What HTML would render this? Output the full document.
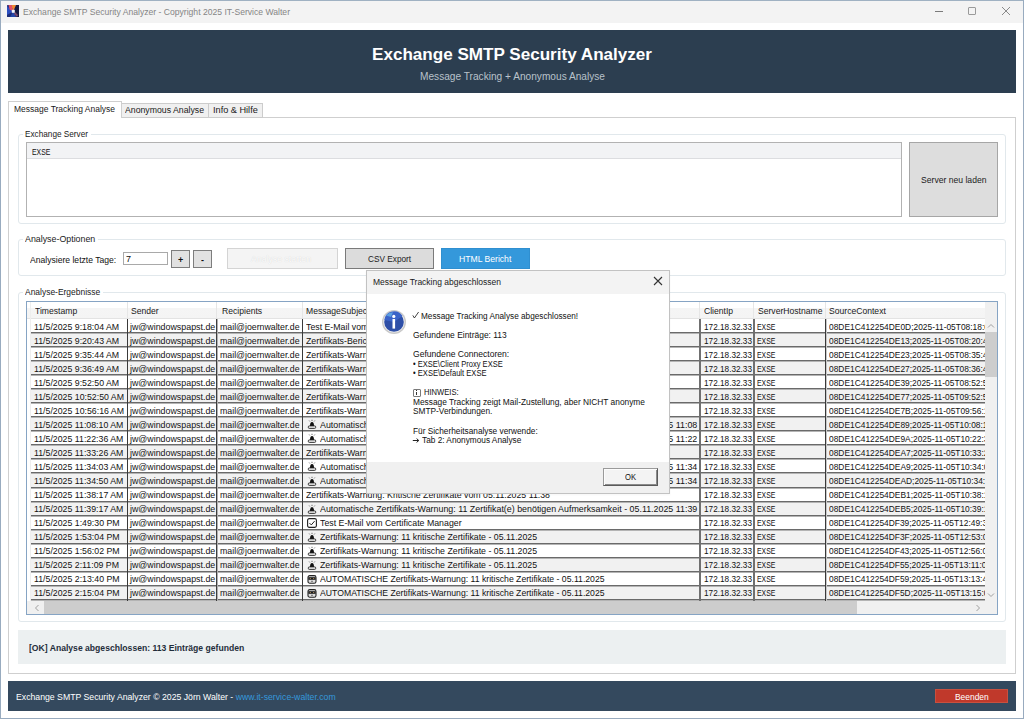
<!DOCTYPE html><html><head><meta charset="utf-8"><style>html,body{margin:0;padding:0;width:1024px;height:719px;overflow:hidden;background:#fff}body{position:relative;font-family:'Liberation Sans',sans-serif}body>div{position:absolute}.t{position:absolute;white-space:nowrap;line-height:normal;transform-origin:0 0}.c{position:absolute;overflow:hidden}</style></head><body>
<div style="left:0px;top:0px;width:1024px;height:719px;background:#fff"></div>
<div style="left:1px;top:1px;width:1022px;height:22px;background:#f3f3f3"></div>
<div style="left:0px;top:0px;width:1024px;height:1px;background:#9fb1c2"></div>
<div style="left:0px;top:0px;width:1px;height:719px;background:#98abbf"></div>
<div style="left:1023px;top:0px;width:1px;height:719px;background:#98abbf"></div>
<div style="left:0px;top:718px;width:1024px;height:1px;background:#98abbf"></div>
<svg style="position:absolute;left:6.5px;top:5px" width="12" height="12" viewBox="0 0 12 12">
<rect width="12" height="12" rx="0.6" fill="#1c2d78"/>
<polygon points="0,1 0,10 6,6.5" fill="#2c4fc0"/>
<polygon points="9,0 12,0 12,12 9,12 6.5,6.5" fill="#141a40"/>
<polygon points="4,0 9,0 6.3,6.3" fill="#f08a30"/>
<polygon points="1.5,0 4.5,0 6.3,6.3 2.5,4.5" fill="#e0506a"/>
<polygon points="3,12 9,12 6.3,6.5" fill="#2446a8"/>
<polygon points="8,7 11,10 10,12 7,9" fill="#7a4a70"/>
<rect x="4.8" y="4.8" width="3" height="3" fill="#f4f4fb"/></svg>
<div class="t" style="left:22.50px;top:5.90px;font-size:9.6px;color:#858585;transform:scaleX(0.8958);">Exchange SMTP Security Analyzer - Copyright 2025 IT-Service Walter</div>
<div style="left:935px;top:11px;width:8px;height:1px;background:#7a7a7a"></div>
<div style="position:absolute;left:968px;top:7px;width:6px;height:6px;border:1px solid #9a9a9a;border-radius:1px"></div>
<svg style="position:absolute;left:1001px;top:6px" width="10" height="10" viewBox="0 0 10 10"><path d="M1 1L9 9M9 1L1 9" stroke="#8a8a8a" stroke-width="1"/></svg>
<div style="left:8px;top:30px;width:1008px;height:63px;background:#2c3e50"></div>
<div class="t" style="left:372.30px;top:44.20px;font-size:17.4px;color:#fff;font-weight:bold;transform:scaleX(0.9820);">Exchange SMTP Security Analyzer</div>
<div class="t" style="left:419.70px;top:70.70px;font-size:10.2px;color:#b9c2cb;transform:scaleX(0.9945);">Message Tracking + Anonymous Analyse</div>
<div style="left:8px;top:117px;width:1008px;height:557px;background:#fff;border:1px solid #cfcfcf;box-sizing:border-box"></div>
<div style="left:121px;top:103px;width:142px;height:15px;background:#f0f0f0;border:1px solid #cccccc;box-sizing:border-box"></div>
<div style="left:208px;top:103px;width:1px;height:15px;background:#cccccc"></div>
<div style="left:8px;top:101px;width:114px;height:17px;background:#fff;border:1px solid #cfcfcf;border-bottom:none;box-sizing:border-box"></div>
<div class="t" style="left:14.40px;top:103.30px;font-size:9.6px;color:#1a1a1a;transform:scaleX(0.8850);">Message Tracking Analyse</div>
<div class="t" style="left:124.60px;top:103.80px;font-size:9.6px;color:#1a1a1a;transform:scaleX(0.9087);">Anonymous Analyse</div>
<div class="t" style="left:213.00px;top:103.80px;font-size:9.6px;color:#1a1a1a;transform:scaleX(0.9545);">Info &amp; Hilfe</div>
<div style="left:18px;top:134px;width:988px;height:90px;border:1px solid #e1e8ec;border-radius:3px;box-sizing:border-box"></div>
<div style="left:22.9px;top:132px;width:68.0px;height:5px;background:#fff"></div>
<div class="t" style="left:24.90px;top:127.70px;font-size:9.8px;color:#1a1a1a;transform:scaleX(0.8383);">Exchange Server</div>
<div style="left:26px;top:142px;width:876px;height:75px;background:#fff;border:1px solid #b2b2b2;box-sizing:border-box"></div>
<div style="left:27px;top:143px;width:874px;height:16px;background:#f2f3f5;border-bottom:1px solid #dcdde0;box-sizing:border-box"></div>
<div class="t" style="left:31.60px;top:146.00px;font-size:9.6px;color:#111;transform:scaleX(0.7146);">EXSE</div>
<div style="left:909px;top:142px;width:89px;height:75px;background:#dddddd;border:1px solid #a6a6a6;box-sizing:border-box"></div>
<div class="t" style="left:920.90px;top:173.90px;font-size:9.8px;color:#222;transform:scaleX(0.8777);">Server neu laden</div>
<div style="left:18px;top:239px;width:988px;height:37px;border:1px solid #e1e8ec;border-radius:3px;box-sizing:border-box"></div>
<div style="left:22.6px;top:237px;width:75.30000000000001px;height:5px;background:#fff"></div>
<div class="t" style="left:24.60px;top:233.00px;font-size:9.8px;color:#1a1a1a;transform:scaleX(0.9025);">Analyse-Optionen</div>
<div class="t" style="left:30.00px;top:253.70px;font-size:9.8px;color:#111;transform:scaleX(0.8761);">Analysiere letzte Tage:</div>
<div style="left:123px;top:252px;width:45px;height:13px;background:#fff;border:1px solid #a9a9a9;box-sizing:border-box"></div>
<div class="t" style="left:125.50px;top:253.40px;font-size:9.8px;color:#111;transform:scaleX(0.9200);">7</div>
<div style="left:171px;top:250px;width:19px;height:18px;background:#e1e1e1;border:1px solid #7d7d7d;box-sizing:border-box"></div>
<div style="left:193px;top:250px;width:19px;height:18px;background:#e1e1e1;border:1px solid #7d7d7d;box-sizing:border-box"></div>
<div class="t" style="left:178.00px;top:253.50px;font-size:9.8px;color:#111;font-weight:bold;transform:scaleX(0.9200);">+</div>
<div class="t" style="left:201.00px;top:253.50px;font-size:9.8px;color:#111;font-weight:bold;transform:scaleX(0.9200);">-</div>
<div style="left:227px;top:248px;width:111px;height:21px;background:#f4f4f4;border:1px solid #d4d4d4;box-sizing:border-box"></div>
<div class="t" style="left:251.00px;top:253.30px;font-size:9.8px;color:#fcfcfc;transform:scaleX(0.8885);text-shadow:0 0 1px #cdcdcd;">Analyse starten</div>
<div style="left:345px;top:248px;width:89px;height:21px;background:#dcdcdc;border:1px solid #7a7a7a;box-sizing:border-box"></div>
<div class="t" style="left:367.50px;top:253.30px;font-size:9.8px;color:#222;transform:scaleX(0.8420);">CSV Export</div>
<div style="left:441px;top:248px;width:89px;height:21px;background:#3498db;border:1px solid #2f8fd0;box-sizing:border-box"></div>
<div class="t" style="left:459.20px;top:253.30px;font-size:9.8px;color:#fff;transform:scaleX(0.8785);">HTML Bericht</div>
<div style="left:18px;top:292px;width:988px;height:330px;border:1px solid #e1e8ec;border-radius:3px;box-sizing:border-box"></div>
<div style="left:22.6px;top:290px;width:80.20000000000002px;height:5px;background:#fff"></div>
<div class="t" style="left:24.60px;top:285.90px;font-size:9.8px;color:#1a1a1a;transform:scaleX(0.8630);">Analyse-Ergebnisse</div>
<div style="left:26px;top:301px;width:972px;height:314px;background:#fff;border:1px solid #86a4c4;box-sizing:border-box"></div>
<div style="left:27px;top:302px;width:958px;height:17px;background:linear-gradient(#ffffff 0,#ffffff 6.5px,#f5f5f5 6.5px,#f4f4f4);border-bottom:1px solid #e3e3e3;box-sizing:border-box"></div>
<div style="left:127px;top:302px;width:1px;height:16px;background:#e6e6e6"></div>
<div style="left:216px;top:302px;width:1px;height:16px;background:#e6e6e6"></div>
<div style="left:302px;top:302px;width:1px;height:16px;background:#e6e6e6"></div>
<div style="left:699px;top:302px;width:1px;height:16px;background:#e6e6e6"></div>
<div style="left:753px;top:302px;width:1px;height:16px;background:#e6e6e6"></div>
<div style="left:825px;top:302px;width:1px;height:16px;background:#e6e6e6"></div>
<div style="left:30px;top:302px;width:1px;height:299px;background:#eeeeee"></div>
<div class="t" style="left:34.90px;top:304.90px;font-size:9.8px;color:#1a1a1a;transform:scaleX(0.8770);">Timestamp</div>
<div class="t" style="left:131.40px;top:304.90px;font-size:9.8px;color:#1a1a1a;transform:scaleX(0.8770);">Sender</div>
<div class="t" style="left:221.70px;top:304.90px;font-size:9.8px;color:#1a1a1a;transform:scaleX(0.8770);">Recipients</div>
<div class="t" style="left:305.80px;top:304.90px;font-size:9.8px;color:#1a1a1a;transform:scaleX(0.8770);">MessageSubject</div>
<div class="t" style="left:704.20px;top:304.90px;font-size:9.8px;color:#1a1a1a;transform:scaleX(0.8770);">ClientIp</div>
<div class="t" style="left:758.10px;top:304.90px;font-size:9.8px;color:#1a1a1a;transform:scaleX(0.8770);">ServerHostname</div>
<div class="t" style="left:829.30px;top:304.90px;font-size:9.8px;color:#1a1a1a;transform:scaleX(0.8770);">SourceContext</div>
<div style="left:31px;top:319px;width:954px;height:13px;background:#ffffff"></div>
<div style="left:31px;top:332px;width:954px;height:1px;background:#6a6a6a"></div>
<div style="left:31px;top:333px;width:954px;height:1px;background:#b4b4b4"></div>
<div class="c" style="left:31px;top:318px;width:96px;height:16px"><div class="t" style="left:2.80px;top:3.00px;font-size:9.8px;color:#111;transform:scaleX(0.8949);">11/5/2025 9:18:04 AM</div></div>
<div class="c" style="left:128px;top:318px;width:88px;height:16px"><div class="t" style="left:1.60px;top:3.00px;font-size:9.8px;color:#111;transform:scaleX(0.9034);">jw@windowspapst.de</div></div>
<div class="c" style="left:218px;top:318px;width:84px;height:16px"><div class="t" style="left:1.90px;top:3.00px;font-size:9.8px;color:#111;transform:scaleX(0.8949);">mail@joernwalter.de</div></div>
<div class="c" style="left:303px;top:318px;width:397px;height:16px"><div class="t" style="left:2.50px;top:3.00px;font-size:9.8px;color:#111;transform:scaleX(0.8949);">Test E-Mail vom Certificate Manager</div></div>
<div class="c" style="left:701px;top:318px;width:53px;height:16px"><div class="t" style="left:2.50px;top:3.00px;font-size:9.8px;color:#111;transform:scaleX(0.8389);">172.18.32.33</div></div>
<div class="c" style="left:755px;top:318px;width:70px;height:16px"><div class="t" style="left:1.60px;top:3.00px;font-size:9.8px;color:#111;transform:scaleX(0.7041);">EXSE</div></div>
<div class="c" style="left:826px;top:318px;width:159px;height:16px"><div class="t" style="left:2.80px;top:3.00px;font-size:9.8px;color:#111;transform:scaleX(0.8569);">08DE1C412254DE0D;2025-11-05T08:18:04</div></div>
<div style="left:31px;top:334px;width:954px;height:12px;background:#f1f1f1"></div>
<div style="left:31px;top:346px;width:954px;height:1px;background:#6a6a6a"></div>
<div style="left:31px;top:347px;width:954px;height:1px;background:#b4b4b4"></div>
<div class="c" style="left:31px;top:331px;width:96px;height:16px"><div class="t" style="left:2.80px;top:3.99px;font-size:9.8px;color:#111;transform:scaleX(0.8949);">11/5/2025 9:20:43 AM</div></div>
<div class="c" style="left:128px;top:331px;width:88px;height:16px"><div class="t" style="left:1.60px;top:3.99px;font-size:9.8px;color:#111;transform:scaleX(0.9034);">jw@windowspapst.de</div></div>
<div class="c" style="left:218px;top:331px;width:84px;height:16px"><div class="t" style="left:1.90px;top:3.99px;font-size:9.8px;color:#111;transform:scaleX(0.8949);">mail@joernwalter.de</div></div>
<div class="c" style="left:303px;top:331px;width:397px;height:16px"><div class="t" style="left:2.50px;top:3.99px;font-size:9.8px;color:#111;transform:scaleX(0.8949);">Zertifikats-Bericht vom 05.11.2025</div></div>
<div class="c" style="left:701px;top:331px;width:53px;height:16px"><div class="t" style="left:2.50px;top:3.99px;font-size:9.8px;color:#111;transform:scaleX(0.8389);">172.18.32.33</div></div>
<div class="c" style="left:755px;top:331px;width:70px;height:16px"><div class="t" style="left:1.60px;top:3.99px;font-size:9.8px;color:#111;transform:scaleX(0.7041);">EXSE</div></div>
<div class="c" style="left:826px;top:331px;width:159px;height:16px"><div class="t" style="left:2.80px;top:3.99px;font-size:9.8px;color:#111;transform:scaleX(0.8569);">08DE1C412254DE13;2025-11-05T08:20:43</div></div>
<div style="left:31px;top:348px;width:954px;height:12px;background:#ffffff"></div>
<div style="left:31px;top:360px;width:954px;height:1px;background:#6a6a6a"></div>
<div style="left:31px;top:361px;width:954px;height:1px;background:#b4b4b4"></div>
<div class="c" style="left:31px;top:345px;width:96px;height:16px"><div class="t" style="left:2.80px;top:3.98px;font-size:9.8px;color:#111;transform:scaleX(0.8949);">11/5/2025 9:35:44 AM</div></div>
<div class="c" style="left:128px;top:345px;width:88px;height:16px"><div class="t" style="left:1.60px;top:3.98px;font-size:9.8px;color:#111;transform:scaleX(0.9034);">jw@windowspapst.de</div></div>
<div class="c" style="left:218px;top:345px;width:84px;height:16px"><div class="t" style="left:1.90px;top:3.98px;font-size:9.8px;color:#111;transform:scaleX(0.8949);">mail@joernwalter.de</div></div>
<div class="c" style="left:303px;top:345px;width:397px;height:16px"><div class="t" style="left:2.50px;top:3.98px;font-size:9.8px;color:#111;transform:scaleX(0.8949);">Zertifikats-Warnung: Kritische Zertifikate vom 05.11.2025 09:35</div></div>
<div class="c" style="left:701px;top:345px;width:53px;height:16px"><div class="t" style="left:2.50px;top:3.98px;font-size:9.8px;color:#111;transform:scaleX(0.8389);">172.18.32.33</div></div>
<div class="c" style="left:755px;top:345px;width:70px;height:16px"><div class="t" style="left:1.60px;top:3.98px;font-size:9.8px;color:#111;transform:scaleX(0.7041);">EXSE</div></div>
<div class="c" style="left:826px;top:345px;width:159px;height:16px"><div class="t" style="left:2.80px;top:3.98px;font-size:9.8px;color:#111;transform:scaleX(0.8569);">08DE1C412254DE23;2025-11-05T08:35:44</div></div>
<div style="left:31px;top:362px;width:954px;height:12px;background:#f1f1f1"></div>
<div style="left:31px;top:374px;width:954px;height:1px;background:#6a6a6a"></div>
<div style="left:31px;top:375px;width:954px;height:1px;background:#b4b4b4"></div>
<div class="c" style="left:31px;top:359px;width:96px;height:16px"><div class="t" style="left:2.80px;top:3.97px;font-size:9.8px;color:#111;transform:scaleX(0.8949);">11/5/2025 9:36:49 AM</div></div>
<div class="c" style="left:128px;top:359px;width:88px;height:16px"><div class="t" style="left:1.60px;top:3.97px;font-size:9.8px;color:#111;transform:scaleX(0.9034);">jw@windowspapst.de</div></div>
<div class="c" style="left:218px;top:359px;width:84px;height:16px"><div class="t" style="left:1.90px;top:3.97px;font-size:9.8px;color:#111;transform:scaleX(0.8949);">mail@joernwalter.de</div></div>
<div class="c" style="left:303px;top:359px;width:397px;height:16px"><div class="t" style="left:2.50px;top:3.97px;font-size:9.8px;color:#111;transform:scaleX(0.8949);">Zertifikats-Warnung: Kritische Zertifikate vom 05.11.2025 09:36</div></div>
<div class="c" style="left:701px;top:359px;width:53px;height:16px"><div class="t" style="left:2.50px;top:3.97px;font-size:9.8px;color:#111;transform:scaleX(0.8389);">172.18.32.33</div></div>
<div class="c" style="left:755px;top:359px;width:70px;height:16px"><div class="t" style="left:1.60px;top:3.97px;font-size:9.8px;color:#111;transform:scaleX(0.7041);">EXSE</div></div>
<div class="c" style="left:826px;top:359px;width:159px;height:16px"><div class="t" style="left:2.80px;top:3.97px;font-size:9.8px;color:#111;transform:scaleX(0.8569);">08DE1C412254DE27;2025-11-05T08:36:49</div></div>
<div style="left:31px;top:376px;width:954px;height:12px;background:#ffffff"></div>
<div style="left:31px;top:388px;width:954px;height:1px;background:#6a6a6a"></div>
<div style="left:31px;top:389px;width:954px;height:1px;background:#b4b4b4"></div>
<div class="c" style="left:31px;top:373px;width:96px;height:16px"><div class="t" style="left:2.80px;top:3.96px;font-size:9.8px;color:#111;transform:scaleX(0.8949);">11/5/2025 9:52:50 AM</div></div>
<div class="c" style="left:128px;top:373px;width:88px;height:16px"><div class="t" style="left:1.60px;top:3.96px;font-size:9.8px;color:#111;transform:scaleX(0.9034);">jw@windowspapst.de</div></div>
<div class="c" style="left:218px;top:373px;width:84px;height:16px"><div class="t" style="left:1.90px;top:3.96px;font-size:9.8px;color:#111;transform:scaleX(0.8949);">mail@joernwalter.de</div></div>
<div class="c" style="left:303px;top:373px;width:397px;height:16px"><div class="t" style="left:2.50px;top:3.96px;font-size:9.8px;color:#111;transform:scaleX(0.8949);">Zertifikats-Warnung: Kritische Zertifikate vom 05.11.2025 09:52</div></div>
<div class="c" style="left:701px;top:373px;width:53px;height:16px"><div class="t" style="left:2.50px;top:3.96px;font-size:9.8px;color:#111;transform:scaleX(0.8389);">172.18.32.33</div></div>
<div class="c" style="left:755px;top:373px;width:70px;height:16px"><div class="t" style="left:1.60px;top:3.96px;font-size:9.8px;color:#111;transform:scaleX(0.7041);">EXSE</div></div>
<div class="c" style="left:826px;top:373px;width:159px;height:16px"><div class="t" style="left:2.80px;top:3.96px;font-size:9.8px;color:#111;transform:scaleX(0.8569);">08DE1C412254DE39;2025-11-05T08:52:50</div></div>
<div style="left:31px;top:390px;width:954px;height:12px;background:#f1f1f1"></div>
<div style="left:31px;top:402px;width:954px;height:1px;background:#6a6a6a"></div>
<div style="left:31px;top:403px;width:954px;height:1px;background:#b4b4b4"></div>
<div class="c" style="left:31px;top:387px;width:96px;height:16px"><div class="t" style="left:2.80px;top:3.95px;font-size:9.8px;color:#111;transform:scaleX(0.8949);">11/5/2025 10:52:50 AM</div></div>
<div class="c" style="left:128px;top:387px;width:88px;height:16px"><div class="t" style="left:1.60px;top:3.95px;font-size:9.8px;color:#111;transform:scaleX(0.9034);">jw@windowspapst.de</div></div>
<div class="c" style="left:218px;top:387px;width:84px;height:16px"><div class="t" style="left:1.90px;top:3.95px;font-size:9.8px;color:#111;transform:scaleX(0.8949);">mail@joernwalter.de</div></div>
<div class="c" style="left:303px;top:387px;width:397px;height:16px"><div class="t" style="left:2.50px;top:3.95px;font-size:9.8px;color:#111;transform:scaleX(0.8949);">Zertifikats-Warnung: Kritische Zertifikate vom 05.11.2025 10:52</div></div>
<div class="c" style="left:701px;top:387px;width:53px;height:16px"><div class="t" style="left:2.50px;top:3.95px;font-size:9.8px;color:#111;transform:scaleX(0.8389);">172.18.32.33</div></div>
<div class="c" style="left:755px;top:387px;width:70px;height:16px"><div class="t" style="left:1.60px;top:3.95px;font-size:9.8px;color:#111;transform:scaleX(0.7041);">EXSE</div></div>
<div class="c" style="left:826px;top:387px;width:159px;height:16px"><div class="t" style="left:2.80px;top:3.95px;font-size:9.8px;color:#111;transform:scaleX(0.8569);">08DE1C412254DE77;2025-11-05T09:52:50</div></div>
<div style="left:31px;top:404px;width:954px;height:12px;background:#ffffff"></div>
<div style="left:31px;top:416px;width:954px;height:1px;background:#6a6a6a"></div>
<div style="left:31px;top:417px;width:954px;height:1px;background:#b4b4b4"></div>
<div class="c" style="left:31px;top:401px;width:96px;height:16px"><div class="t" style="left:2.80px;top:3.94px;font-size:9.8px;color:#111;transform:scaleX(0.8949);">11/5/2025 10:56:16 AM</div></div>
<div class="c" style="left:128px;top:401px;width:88px;height:16px"><div class="t" style="left:1.60px;top:3.94px;font-size:9.8px;color:#111;transform:scaleX(0.9034);">jw@windowspapst.de</div></div>
<div class="c" style="left:218px;top:401px;width:84px;height:16px"><div class="t" style="left:1.90px;top:3.94px;font-size:9.8px;color:#111;transform:scaleX(0.8949);">mail@joernwalter.de</div></div>
<div class="c" style="left:303px;top:401px;width:397px;height:16px"><div class="t" style="left:2.50px;top:3.94px;font-size:9.8px;color:#111;transform:scaleX(0.8949);">Zertifikats-Warnung: Kritische Zertifikate vom 05.11.2025 10:56</div></div>
<div class="c" style="left:701px;top:401px;width:53px;height:16px"><div class="t" style="left:2.50px;top:3.94px;font-size:9.8px;color:#111;transform:scaleX(0.8389);">172.18.32.33</div></div>
<div class="c" style="left:755px;top:401px;width:70px;height:16px"><div class="t" style="left:1.60px;top:3.94px;font-size:9.8px;color:#111;transform:scaleX(0.7041);">EXSE</div></div>
<div class="c" style="left:826px;top:401px;width:159px;height:16px"><div class="t" style="left:2.80px;top:3.94px;font-size:9.8px;color:#111;transform:scaleX(0.8569);">08DE1C412254DE7B;2025-11-05T09:56:16</div></div>
<div style="left:31px;top:418px;width:954px;height:12px;background:#f1f1f1"></div>
<div style="left:31px;top:430px;width:954px;height:1px;background:#6a6a6a"></div>
<div style="left:31px;top:431px;width:954px;height:1px;background:#b4b4b4"></div>
<div class="c" style="left:31px;top:415px;width:96px;height:16px"><div class="t" style="left:2.80px;top:3.93px;font-size:9.8px;color:#111;transform:scaleX(0.8949);">11/5/2025 11:08:10 AM</div></div>
<div class="c" style="left:128px;top:415px;width:88px;height:16px"><div class="t" style="left:1.60px;top:3.93px;font-size:9.8px;color:#111;transform:scaleX(0.9034);">jw@windowspapst.de</div></div>
<div class="c" style="left:218px;top:415px;width:84px;height:16px"><div class="t" style="left:1.90px;top:3.93px;font-size:9.8px;color:#111;transform:scaleX(0.8949);">mail@joernwalter.de</div></div>
<svg style="position:absolute;left:306.5px;top:419px" width="10" height="10" viewBox="0 0 10 10"><path d="M2.2 1.6l.6.8M5 .8v1.1M7.8 1.6l-.6.8" stroke="#333" stroke-width="0.8"/><path d="M3 7.2 Q3 3 5 3 Q7 3 7 7.2Z" fill="#111"/><rect x="1.3" y="6.9" width="7.4" height="2.5" rx="1" fill="#e8e8e8" stroke="#222" stroke-width="0.9"/></svg>
<div class="c" style="left:303px;top:415px;width:397px;height:16px"><div class="t" style="left:17.20px;top:3.93px;font-size:9.8px;color:#111;transform:scaleX(0.9053);">Automatische Zertifikats-Warnung: 11 Zertifikat(e) benötigen Aufmerksamkeit - 05.11.2025 11:08</div></div>
<div class="c" style="left:701px;top:415px;width:53px;height:16px"><div class="t" style="left:2.50px;top:3.93px;font-size:9.8px;color:#111;transform:scaleX(0.8389);">172.18.32.33</div></div>
<div class="c" style="left:755px;top:415px;width:70px;height:16px"><div class="t" style="left:1.60px;top:3.93px;font-size:9.8px;color:#111;transform:scaleX(0.7041);">EXSE</div></div>
<div class="c" style="left:826px;top:415px;width:159px;height:16px"><div class="t" style="left:2.80px;top:3.93px;font-size:9.8px;color:#111;transform:scaleX(0.8569);">08DE1C412254DE89;2025-11-05T10:08:10</div></div>
<div style="left:31px;top:432px;width:954px;height:12px;background:#ffffff"></div>
<div style="left:31px;top:444px;width:954px;height:1px;background:#6a6a6a"></div>
<div style="left:31px;top:445px;width:954px;height:1px;background:#b4b4b4"></div>
<div class="c" style="left:31px;top:429px;width:96px;height:16px"><div class="t" style="left:2.80px;top:3.92px;font-size:9.8px;color:#111;transform:scaleX(0.8949);">11/5/2025 11:22:36 AM</div></div>
<div class="c" style="left:128px;top:429px;width:88px;height:16px"><div class="t" style="left:1.60px;top:3.92px;font-size:9.8px;color:#111;transform:scaleX(0.9034);">jw@windowspapst.de</div></div>
<div class="c" style="left:218px;top:429px;width:84px;height:16px"><div class="t" style="left:1.90px;top:3.92px;font-size:9.8px;color:#111;transform:scaleX(0.8949);">mail@joernwalter.de</div></div>
<svg style="position:absolute;left:306.5px;top:433px" width="10" height="10" viewBox="0 0 10 10"><path d="M2.2 1.6l.6.8M5 .8v1.1M7.8 1.6l-.6.8" stroke="#333" stroke-width="0.8"/><path d="M3 7.2 Q3 3 5 3 Q7 3 7 7.2Z" fill="#111"/><rect x="1.3" y="6.9" width="7.4" height="2.5" rx="1" fill="#e8e8e8" stroke="#222" stroke-width="0.9"/></svg>
<div class="c" style="left:303px;top:429px;width:397px;height:16px"><div class="t" style="left:17.20px;top:3.92px;font-size:9.8px;color:#111;transform:scaleX(0.9053);">Automatische Zertifikats-Warnung: 11 Zertifikat(e) benötigen Aufmerksamkeit - 05.11.2025 11:22</div></div>
<div class="c" style="left:701px;top:429px;width:53px;height:16px"><div class="t" style="left:2.50px;top:3.92px;font-size:9.8px;color:#111;transform:scaleX(0.8389);">172.18.32.33</div></div>
<div class="c" style="left:755px;top:429px;width:70px;height:16px"><div class="t" style="left:1.60px;top:3.92px;font-size:9.8px;color:#111;transform:scaleX(0.7041);">EXSE</div></div>
<div class="c" style="left:826px;top:429px;width:159px;height:16px"><div class="t" style="left:2.80px;top:3.92px;font-size:9.8px;color:#111;transform:scaleX(0.8569);">08DE1C412254DE9A;2025-11-05T10:22:36</div></div>
<div style="left:31px;top:446px;width:954px;height:12px;background:#f1f1f1"></div>
<div style="left:31px;top:458px;width:954px;height:1px;background:#6a6a6a"></div>
<div style="left:31px;top:459px;width:954px;height:1px;background:#b4b4b4"></div>
<div class="c" style="left:31px;top:443px;width:96px;height:16px"><div class="t" style="left:2.80px;top:3.91px;font-size:9.8px;color:#111;transform:scaleX(0.8949);">11/5/2025 11:33:26 AM</div></div>
<div class="c" style="left:128px;top:443px;width:88px;height:16px"><div class="t" style="left:1.60px;top:3.91px;font-size:9.8px;color:#111;transform:scaleX(0.9034);">jw@windowspapst.de</div></div>
<div class="c" style="left:218px;top:443px;width:84px;height:16px"><div class="t" style="left:1.90px;top:3.91px;font-size:9.8px;color:#111;transform:scaleX(0.8949);">mail@joernwalter.de</div></div>
<div class="c" style="left:303px;top:443px;width:397px;height:16px"><div class="t" style="left:2.50px;top:3.91px;font-size:9.8px;color:#111;transform:scaleX(0.8949);">Zertifikats-Warnung: Kritische Zertifikate vom 05.11.2025 11:33</div></div>
<div class="c" style="left:701px;top:443px;width:53px;height:16px"><div class="t" style="left:2.50px;top:3.91px;font-size:9.8px;color:#111;transform:scaleX(0.8389);">172.18.32.33</div></div>
<div class="c" style="left:755px;top:443px;width:70px;height:16px"><div class="t" style="left:1.60px;top:3.91px;font-size:9.8px;color:#111;transform:scaleX(0.7041);">EXSE</div></div>
<div class="c" style="left:826px;top:443px;width:159px;height:16px"><div class="t" style="left:2.80px;top:3.91px;font-size:9.8px;color:#111;transform:scaleX(0.8569);">08DE1C412254DEA7;2025-11-05T10:33:26</div></div>
<div style="left:31px;top:460px;width:954px;height:12px;background:#ffffff"></div>
<div style="left:31px;top:472px;width:954px;height:1px;background:#6a6a6a"></div>
<div style="left:31px;top:473px;width:954px;height:1px;background:#b4b4b4"></div>
<div class="c" style="left:31px;top:457px;width:96px;height:16px"><div class="t" style="left:2.80px;top:3.90px;font-size:9.8px;color:#111;transform:scaleX(0.8949);">11/5/2025 11:34:03 AM</div></div>
<div class="c" style="left:128px;top:457px;width:88px;height:16px"><div class="t" style="left:1.60px;top:3.90px;font-size:9.8px;color:#111;transform:scaleX(0.9034);">jw@windowspapst.de</div></div>
<div class="c" style="left:218px;top:457px;width:84px;height:16px"><div class="t" style="left:1.90px;top:3.90px;font-size:9.8px;color:#111;transform:scaleX(0.8949);">mail@joernwalter.de</div></div>
<svg style="position:absolute;left:306.5px;top:461px" width="10" height="10" viewBox="0 0 10 10"><path d="M2.2 1.6l.6.8M5 .8v1.1M7.8 1.6l-.6.8" stroke="#333" stroke-width="0.8"/><path d="M3 7.2 Q3 3 5 3 Q7 3 7 7.2Z" fill="#111"/><rect x="1.3" y="6.9" width="7.4" height="2.5" rx="1" fill="#e8e8e8" stroke="#222" stroke-width="0.9"/></svg>
<div class="c" style="left:303px;top:457px;width:397px;height:16px"><div class="t" style="left:17.20px;top:3.90px;font-size:9.8px;color:#111;transform:scaleX(0.9053);">Automatische Zertifikats-Warnung: 11 Zertifikat(e) benötigen Aufmerksamkeit - 05.11.2025 11:34</div></div>
<div class="c" style="left:701px;top:457px;width:53px;height:16px"><div class="t" style="left:2.50px;top:3.90px;font-size:9.8px;color:#111;transform:scaleX(0.8389);">172.18.32.33</div></div>
<div class="c" style="left:755px;top:457px;width:70px;height:16px"><div class="t" style="left:1.60px;top:3.90px;font-size:9.8px;color:#111;transform:scaleX(0.7041);">EXSE</div></div>
<div class="c" style="left:826px;top:457px;width:159px;height:16px"><div class="t" style="left:2.80px;top:3.90px;font-size:9.8px;color:#111;transform:scaleX(0.8569);">08DE1C412254DEA9;2025-11-05T10:34:03</div></div>
<div style="left:31px;top:474px;width:954px;height:13px;background:#f1f1f1"></div>
<div style="left:31px;top:487px;width:954px;height:1px;background:#6a6a6a"></div>
<div style="left:31px;top:488px;width:954px;height:1px;background:#b4b4b4"></div>
<div class="c" style="left:31px;top:471px;width:96px;height:16px"><div class="t" style="left:2.80px;top:3.89px;font-size:9.8px;color:#111;transform:scaleX(0.8949);">11/5/2025 11:34:50 AM</div></div>
<div class="c" style="left:128px;top:471px;width:88px;height:16px"><div class="t" style="left:1.60px;top:3.89px;font-size:9.8px;color:#111;transform:scaleX(0.9034);">jw@windowspapst.de</div></div>
<div class="c" style="left:218px;top:471px;width:84px;height:16px"><div class="t" style="left:1.90px;top:3.89px;font-size:9.8px;color:#111;transform:scaleX(0.8949);">mail@joernwalter.de</div></div>
<svg style="position:absolute;left:306.5px;top:476px" width="10" height="10" viewBox="0 0 10 10"><path d="M2.2 1.6l.6.8M5 .8v1.1M7.8 1.6l-.6.8" stroke="#333" stroke-width="0.8"/><path d="M3 7.2 Q3 3 5 3 Q7 3 7 7.2Z" fill="#111"/><rect x="1.3" y="6.9" width="7.4" height="2.5" rx="1" fill="#e8e8e8" stroke="#222" stroke-width="0.9"/></svg>
<div class="c" style="left:303px;top:471px;width:397px;height:16px"><div class="t" style="left:17.20px;top:3.89px;font-size:9.8px;color:#111;transform:scaleX(0.9053);">Automatische Zertifikats-Warnung: 11 Zertifikat(e) benötigen Aufmerksamkeit - 05.11.2025 11:34</div></div>
<div class="c" style="left:701px;top:471px;width:53px;height:16px"><div class="t" style="left:2.50px;top:3.89px;font-size:9.8px;color:#111;transform:scaleX(0.8389);">172.18.32.33</div></div>
<div class="c" style="left:755px;top:471px;width:70px;height:16px"><div class="t" style="left:1.60px;top:3.89px;font-size:9.8px;color:#111;transform:scaleX(0.7041);">EXSE</div></div>
<div class="c" style="left:826px;top:471px;width:159px;height:16px"><div class="t" style="left:2.80px;top:3.89px;font-size:9.8px;color:#111;transform:scaleX(0.8569);">08DE1C412254DEAD;2025-11-05T10:34:50</div></div>
<div style="left:31px;top:489px;width:954px;height:12px;background:#ffffff"></div>
<div style="left:31px;top:501px;width:954px;height:1px;background:#6a6a6a"></div>
<div style="left:31px;top:502px;width:954px;height:1px;background:#b4b4b4"></div>
<div class="c" style="left:31px;top:485px;width:96px;height:16px"><div class="t" style="left:2.80px;top:3.88px;font-size:9.8px;color:#111;transform:scaleX(0.8949);">11/5/2025 11:38:17 AM</div></div>
<div class="c" style="left:128px;top:485px;width:88px;height:16px"><div class="t" style="left:1.60px;top:3.88px;font-size:9.8px;color:#111;transform:scaleX(0.9034);">jw@windowspapst.de</div></div>
<div class="c" style="left:218px;top:485px;width:84px;height:16px"><div class="t" style="left:1.90px;top:3.88px;font-size:9.8px;color:#111;transform:scaleX(0.8949);">mail@joernwalter.de</div></div>
<div class="c" style="left:303px;top:485px;width:397px;height:16px"><div class="t" style="left:2.50px;top:3.88px;font-size:9.8px;color:#111;transform:scaleX(0.8949);">Zertifikats-Warnung: Kritische Zertifikate vom 05.11.2025 11:38</div></div>
<div class="c" style="left:701px;top:485px;width:53px;height:16px"><div class="t" style="left:2.50px;top:3.88px;font-size:9.8px;color:#111;transform:scaleX(0.8389);">172.18.32.33</div></div>
<div class="c" style="left:755px;top:485px;width:70px;height:16px"><div class="t" style="left:1.60px;top:3.88px;font-size:9.8px;color:#111;transform:scaleX(0.7041);">EXSE</div></div>
<div class="c" style="left:826px;top:485px;width:159px;height:16px"><div class="t" style="left:2.80px;top:3.88px;font-size:9.8px;color:#111;transform:scaleX(0.8569);">08DE1C412254DEB1;2025-11-05T10:38:17</div></div>
<div style="left:31px;top:503px;width:954px;height:12px;background:#f1f1f1"></div>
<div style="left:31px;top:515px;width:954px;height:1px;background:#6a6a6a"></div>
<div style="left:31px;top:516px;width:954px;height:1px;background:#b4b4b4"></div>
<div class="c" style="left:31px;top:499px;width:96px;height:16px"><div class="t" style="left:2.80px;top:3.87px;font-size:9.8px;color:#111;transform:scaleX(0.8949);">11/5/2025 11:39:17 AM</div></div>
<div class="c" style="left:128px;top:499px;width:88px;height:16px"><div class="t" style="left:1.60px;top:3.87px;font-size:9.8px;color:#111;transform:scaleX(0.9034);">jw@windowspapst.de</div></div>
<div class="c" style="left:218px;top:499px;width:84px;height:16px"><div class="t" style="left:1.90px;top:3.87px;font-size:9.8px;color:#111;transform:scaleX(0.8949);">mail@joernwalter.de</div></div>
<svg style="position:absolute;left:306.5px;top:504px" width="10" height="10" viewBox="0 0 10 10"><path d="M2.2 1.6l.6.8M5 .8v1.1M7.8 1.6l-.6.8" stroke="#333" stroke-width="0.8"/><path d="M3 7.2 Q3 3 5 3 Q7 3 7 7.2Z" fill="#111"/><rect x="1.3" y="6.9" width="7.4" height="2.5" rx="1" fill="#e8e8e8" stroke="#222" stroke-width="0.9"/></svg>
<div class="c" style="left:303px;top:499px;width:397px;height:16px"><div class="t" style="left:17.20px;top:3.87px;font-size:9.8px;color:#111;transform:scaleX(0.9053);">Automatische Zertifikats-Warnung: 11 Zertifikat(e) benötigen Aufmerksamkeit - 05.11.2025 11:39</div></div>
<div class="c" style="left:701px;top:499px;width:53px;height:16px"><div class="t" style="left:2.50px;top:3.87px;font-size:9.8px;color:#111;transform:scaleX(0.8389);">172.18.32.33</div></div>
<div class="c" style="left:755px;top:499px;width:70px;height:16px"><div class="t" style="left:1.60px;top:3.87px;font-size:9.8px;color:#111;transform:scaleX(0.7041);">EXSE</div></div>
<div class="c" style="left:826px;top:499px;width:159px;height:16px"><div class="t" style="left:2.80px;top:3.87px;font-size:9.8px;color:#111;transform:scaleX(0.8569);">08DE1C412254DEB5;2025-11-05T10:39:17</div></div>
<div style="left:31px;top:517px;width:954px;height:12px;background:#ffffff"></div>
<div style="left:31px;top:529px;width:954px;height:1px;background:#6a6a6a"></div>
<div style="left:31px;top:530px;width:954px;height:1px;background:#b4b4b4"></div>
<div class="c" style="left:31px;top:513px;width:96px;height:16px"><div class="t" style="left:2.80px;top:3.86px;font-size:9.8px;color:#111;transform:scaleX(0.8949);">11/5/2025 1:49:30 PM</div></div>
<div class="c" style="left:128px;top:513px;width:88px;height:16px"><div class="t" style="left:1.60px;top:3.86px;font-size:9.8px;color:#111;transform:scaleX(0.9034);">jw@windowspapst.de</div></div>
<div class="c" style="left:218px;top:513px;width:84px;height:16px"><div class="t" style="left:1.90px;top:3.86px;font-size:9.8px;color:#111;transform:scaleX(0.8949);">mail@joernwalter.de</div></div>
<svg style="position:absolute;left:306.5px;top:518px" width="10" height="10" viewBox="0 0 10 10"><rect x="0.6" y="0.6" width="8.8" height="8.8" rx="1.6" fill="none" stroke="#222" stroke-width="1.1"/><path d="M2.5 5.1 L4.3 6.9 L7.6 3.1" stroke="#222" stroke-width="1" fill="none"/></svg>
<div class="c" style="left:303px;top:513px;width:397px;height:16px"><div class="t" style="left:17.20px;top:3.86px;font-size:9.8px;color:#111;transform:scaleX(0.8968);">Test E-Mail vom Certificate Manager</div></div>
<div class="c" style="left:701px;top:513px;width:53px;height:16px"><div class="t" style="left:2.50px;top:3.86px;font-size:9.8px;color:#111;transform:scaleX(0.8389);">172.18.32.33</div></div>
<div class="c" style="left:755px;top:513px;width:70px;height:16px"><div class="t" style="left:1.60px;top:3.86px;font-size:9.8px;color:#111;transform:scaleX(0.7041);">EXSE</div></div>
<div class="c" style="left:826px;top:513px;width:159px;height:16px"><div class="t" style="left:2.80px;top:3.86px;font-size:9.8px;color:#111;transform:scaleX(0.8569);">08DE1C412254DF39;2025-11-05T12:49:30</div></div>
<div style="left:31px;top:531px;width:954px;height:12px;background:#f1f1f1"></div>
<div style="left:31px;top:543px;width:954px;height:1px;background:#6a6a6a"></div>
<div style="left:31px;top:544px;width:954px;height:1px;background:#b4b4b4"></div>
<div class="c" style="left:31px;top:527px;width:96px;height:16px"><div class="t" style="left:2.80px;top:3.85px;font-size:9.8px;color:#111;transform:scaleX(0.8949);">11/5/2025 1:53:04 PM</div></div>
<div class="c" style="left:128px;top:527px;width:88px;height:16px"><div class="t" style="left:1.60px;top:3.85px;font-size:9.8px;color:#111;transform:scaleX(0.9034);">jw@windowspapst.de</div></div>
<div class="c" style="left:218px;top:527px;width:84px;height:16px"><div class="t" style="left:1.90px;top:3.85px;font-size:9.8px;color:#111;transform:scaleX(0.8949);">mail@joernwalter.de</div></div>
<svg style="position:absolute;left:306.5px;top:532px" width="10" height="10" viewBox="0 0 10 10"><path d="M2.2 1.6l.6.8M5 .8v1.1M7.8 1.6l-.6.8" stroke="#333" stroke-width="0.8"/><path d="M3 7.2 Q3 3 5 3 Q7 3 7 7.2Z" fill="#111"/><rect x="1.3" y="6.9" width="7.4" height="2.5" rx="1" fill="#e8e8e8" stroke="#222" stroke-width="0.9"/></svg>
<div class="c" style="left:303px;top:527px;width:397px;height:16px"><div class="t" style="left:17.20px;top:3.85px;font-size:9.8px;color:#111;transform:scaleX(0.8968);">Zertifikats-Warnung: 11 kritische Zertifikate - 05.11.2025</div></div>
<div class="c" style="left:701px;top:527px;width:53px;height:16px"><div class="t" style="left:2.50px;top:3.85px;font-size:9.8px;color:#111;transform:scaleX(0.8389);">172.18.32.33</div></div>
<div class="c" style="left:755px;top:527px;width:70px;height:16px"><div class="t" style="left:1.60px;top:3.85px;font-size:9.8px;color:#111;transform:scaleX(0.7041);">EXSE</div></div>
<div class="c" style="left:826px;top:527px;width:159px;height:16px"><div class="t" style="left:2.80px;top:3.85px;font-size:9.8px;color:#111;transform:scaleX(0.8569);">08DE1C412254DF3F;2025-11-05T12:53:04</div></div>
<div style="left:31px;top:545px;width:954px;height:12px;background:#ffffff"></div>
<div style="left:31px;top:557px;width:954px;height:1px;background:#6a6a6a"></div>
<div style="left:31px;top:558px;width:954px;height:1px;background:#b4b4b4"></div>
<div class="c" style="left:31px;top:541px;width:96px;height:16px"><div class="t" style="left:2.80px;top:3.84px;font-size:9.8px;color:#111;transform:scaleX(0.8949);">11/5/2025 1:56:02 PM</div></div>
<div class="c" style="left:128px;top:541px;width:88px;height:16px"><div class="t" style="left:1.60px;top:3.84px;font-size:9.8px;color:#111;transform:scaleX(0.9034);">jw@windowspapst.de</div></div>
<div class="c" style="left:218px;top:541px;width:84px;height:16px"><div class="t" style="left:1.90px;top:3.84px;font-size:9.8px;color:#111;transform:scaleX(0.8949);">mail@joernwalter.de</div></div>
<svg style="position:absolute;left:306.5px;top:546px" width="10" height="10" viewBox="0 0 10 10"><path d="M2.2 1.6l.6.8M5 .8v1.1M7.8 1.6l-.6.8" stroke="#333" stroke-width="0.8"/><path d="M3 7.2 Q3 3 5 3 Q7 3 7 7.2Z" fill="#111"/><rect x="1.3" y="6.9" width="7.4" height="2.5" rx="1" fill="#e8e8e8" stroke="#222" stroke-width="0.9"/></svg>
<div class="c" style="left:303px;top:541px;width:397px;height:16px"><div class="t" style="left:17.20px;top:3.84px;font-size:9.8px;color:#111;transform:scaleX(0.8968);">Zertifikats-Warnung: 11 kritische Zertifikate - 05.11.2025</div></div>
<div class="c" style="left:701px;top:541px;width:53px;height:16px"><div class="t" style="left:2.50px;top:3.84px;font-size:9.8px;color:#111;transform:scaleX(0.8389);">172.18.32.33</div></div>
<div class="c" style="left:755px;top:541px;width:70px;height:16px"><div class="t" style="left:1.60px;top:3.84px;font-size:9.8px;color:#111;transform:scaleX(0.7041);">EXSE</div></div>
<div class="c" style="left:826px;top:541px;width:159px;height:16px"><div class="t" style="left:2.80px;top:3.84px;font-size:9.8px;color:#111;transform:scaleX(0.8569);">08DE1C412254DF43;2025-11-05T12:56:02</div></div>
<div style="left:31px;top:559px;width:954px;height:12px;background:#f1f1f1"></div>
<div style="left:31px;top:571px;width:954px;height:1px;background:#6a6a6a"></div>
<div style="left:31px;top:572px;width:954px;height:1px;background:#b4b4b4"></div>
<div class="c" style="left:31px;top:555px;width:96px;height:16px"><div class="t" style="left:2.80px;top:3.83px;font-size:9.8px;color:#111;transform:scaleX(0.8949);">11/5/2025 2:11:09 PM</div></div>
<div class="c" style="left:128px;top:555px;width:88px;height:16px"><div class="t" style="left:1.60px;top:3.83px;font-size:9.8px;color:#111;transform:scaleX(0.9034);">jw@windowspapst.de</div></div>
<div class="c" style="left:218px;top:555px;width:84px;height:16px"><div class="t" style="left:1.90px;top:3.83px;font-size:9.8px;color:#111;transform:scaleX(0.8949);">mail@joernwalter.de</div></div>
<svg style="position:absolute;left:306.5px;top:560px" width="10" height="10" viewBox="0 0 10 10"><path d="M2.2 1.6l.6.8M5 .8v1.1M7.8 1.6l-.6.8" stroke="#333" stroke-width="0.8"/><path d="M3 7.2 Q3 3 5 3 Q7 3 7 7.2Z" fill="#111"/><rect x="1.3" y="6.9" width="7.4" height="2.5" rx="1" fill="#e8e8e8" stroke="#222" stroke-width="0.9"/></svg>
<div class="c" style="left:303px;top:555px;width:397px;height:16px"><div class="t" style="left:17.20px;top:3.83px;font-size:9.8px;color:#111;transform:scaleX(0.8968);">Zertifikats-Warnung: 11 kritische Zertifikate - 05.11.2025</div></div>
<div class="c" style="left:701px;top:555px;width:53px;height:16px"><div class="t" style="left:2.50px;top:3.83px;font-size:9.8px;color:#111;transform:scaleX(0.8389);">172.18.32.33</div></div>
<div class="c" style="left:755px;top:555px;width:70px;height:16px"><div class="t" style="left:1.60px;top:3.83px;font-size:9.8px;color:#111;transform:scaleX(0.7041);">EXSE</div></div>
<div class="c" style="left:826px;top:555px;width:159px;height:16px"><div class="t" style="left:2.80px;top:3.83px;font-size:9.8px;color:#111;transform:scaleX(0.8569);">08DE1C412254DF55;2025-11-05T13:11:09</div></div>
<div style="left:31px;top:573px;width:954px;height:12px;background:#ffffff"></div>
<div style="left:31px;top:585px;width:954px;height:1px;background:#6a6a6a"></div>
<div style="left:31px;top:586px;width:954px;height:1px;background:#b4b4b4"></div>
<div class="c" style="left:31px;top:569px;width:96px;height:16px"><div class="t" style="left:2.80px;top:3.82px;font-size:9.8px;color:#111;transform:scaleX(0.8949);">11/5/2025 2:13:40 PM</div></div>
<div class="c" style="left:128px;top:569px;width:88px;height:16px"><div class="t" style="left:1.60px;top:3.82px;font-size:9.8px;color:#111;transform:scaleX(0.9034);">jw@windowspapst.de</div></div>
<div class="c" style="left:218px;top:569px;width:84px;height:16px"><div class="t" style="left:1.90px;top:3.82px;font-size:9.8px;color:#111;transform:scaleX(0.8949);">mail@joernwalter.de</div></div>
<svg style="position:absolute;left:306.5px;top:574px" width="10" height="10" viewBox="0 0 10 10"><rect x="1" y="1.6" width="8" height="7.6" rx="1.8" fill="#ddd" stroke="#222" stroke-width="1.1"/><path d="M2 1.2l.8.8M8 1.2l-.8.8" stroke="#333" stroke-width="0.7"/><rect x="1.4" y="3.2" width="7.2" height="2.6" fill="#1a1a1a"/><circle cx="3.3" cy="4.5" r="0.6" fill="#c9a46a"/><circle cx="6.7" cy="4.5" r="0.6" fill="#c9a46a"/><path d="M4 7.3h2" stroke="#555" stroke-width="0.8"/></svg>
<div class="c" style="left:303px;top:569px;width:397px;height:16px"><div class="t" style="left:17.20px;top:3.82px;font-size:9.8px;color:#111;transform:scaleX(0.8844);">AUTOMATISCHE Zertifikats-Warnung: 11 kritische Zertifikate - 05.11.2025</div></div>
<div class="c" style="left:701px;top:569px;width:53px;height:16px"><div class="t" style="left:2.50px;top:3.82px;font-size:9.8px;color:#111;transform:scaleX(0.8389);">172.18.32.33</div></div>
<div class="c" style="left:755px;top:569px;width:70px;height:16px"><div class="t" style="left:1.60px;top:3.82px;font-size:9.8px;color:#111;transform:scaleX(0.7041);">EXSE</div></div>
<div class="c" style="left:826px;top:569px;width:159px;height:16px"><div class="t" style="left:2.80px;top:3.82px;font-size:9.8px;color:#111;transform:scaleX(0.8569);">08DE1C412254DF59;2025-11-05T13:13:40</div></div>
<div style="left:31px;top:587px;width:954px;height:12px;background:#f1f1f1"></div>
<div style="left:31px;top:599px;width:954px;height:1px;background:#6a6a6a"></div>
<div style="left:31px;top:600px;width:954px;height:1px;background:#b4b4b4"></div>
<div class="c" style="left:31px;top:583px;width:96px;height:16px"><div class="t" style="left:2.80px;top:3.81px;font-size:9.8px;color:#111;transform:scaleX(0.8949);">11/5/2025 2:15:04 PM</div></div>
<div class="c" style="left:128px;top:583px;width:88px;height:16px"><div class="t" style="left:1.60px;top:3.81px;font-size:9.8px;color:#111;transform:scaleX(0.9034);">jw@windowspapst.de</div></div>
<div class="c" style="left:218px;top:583px;width:84px;height:16px"><div class="t" style="left:1.90px;top:3.81px;font-size:9.8px;color:#111;transform:scaleX(0.8949);">mail@joernwalter.de</div></div>
<svg style="position:absolute;left:306.5px;top:588px" width="10" height="10" viewBox="0 0 10 10"><rect x="1" y="1.6" width="8" height="7.6" rx="1.8" fill="#ddd" stroke="#222" stroke-width="1.1"/><path d="M2 1.2l.8.8M8 1.2l-.8.8" stroke="#333" stroke-width="0.7"/><rect x="1.4" y="3.2" width="7.2" height="2.6" fill="#1a1a1a"/><circle cx="3.3" cy="4.5" r="0.6" fill="#c9a46a"/><circle cx="6.7" cy="4.5" r="0.6" fill="#c9a46a"/><path d="M4 7.3h2" stroke="#555" stroke-width="0.8"/></svg>
<div class="c" style="left:303px;top:583px;width:397px;height:16px"><div class="t" style="left:17.20px;top:3.81px;font-size:9.8px;color:#111;transform:scaleX(0.8844);">AUTOMATISCHE Zertifikats-Warnung: 11 kritische Zertifikate - 05.11.2025</div></div>
<div class="c" style="left:701px;top:583px;width:53px;height:16px"><div class="t" style="left:2.50px;top:3.81px;font-size:9.8px;color:#111;transform:scaleX(0.8389);">172.18.32.33</div></div>
<div class="c" style="left:755px;top:583px;width:70px;height:16px"><div class="t" style="left:1.60px;top:3.81px;font-size:9.8px;color:#111;transform:scaleX(0.7041);">EXSE</div></div>
<div class="c" style="left:826px;top:583px;width:159px;height:16px"><div class="t" style="left:2.80px;top:3.81px;font-size:9.8px;color:#111;transform:scaleX(0.8569);">08DE1C412254DF5D;2025-11-05T13:15:04</div></div>
<div style="left:127px;top:319px;width:1px;height:282px;background:#3a3a3a"></div>
<div style="left:216px;top:319px;width:1px;height:282px;background:#3e3e3e"></div>
<div style="left:217px;top:319px;width:1px;height:282px;background:#b0b0b0"></div>
<div style="left:302px;top:319px;width:1px;height:282px;background:#3a3a3a"></div>
<div style="left:699px;top:319px;width:1px;height:282px;background:#707070"></div>
<div style="left:700px;top:319px;width:1px;height:282px;background:#707070"></div>
<div style="left:753px;top:319px;width:1px;height:282px;background:#707070"></div>
<div style="left:754px;top:319px;width:1px;height:282px;background:#707070"></div>
<div style="left:825px;top:319px;width:1px;height:282px;background:#3a3a3a"></div>
<div style="left:826px;top:319px;width:1px;height:282px;background:#c8c8c8"></div>
<div style="left:985px;top:302px;width:12px;height:312px;background:#f0f0f0"></div>
<div style="left:985px;top:332px;width:12px;height:45px;background:#cdcdcd"></div>
<div style="left:27px;top:601px;width:958px;height:13px;background:#f0f0f0"></div>
<div style="left:44px;top:601px;width:813px;height:13px;background:#cdcdcd"></div>
<svg style="position:absolute;left:987px;top:323px" width="8" height="6" viewBox="0 0 8 6"><path d="M1 4.5L4 1.5L7 4.5" stroke="#a0a0a0" stroke-width="1" fill="none"/></svg>
<svg style="position:absolute;left:987px;top:592px" width="8" height="6" viewBox="0 0 8 6"><path d="M1 1.5L4 4.5L7 1.5" stroke="#a0a0a0" stroke-width="1" fill="none"/></svg>
<svg style="position:absolute;left:34px;top:604px" width="6" height="8" viewBox="0 0 6 8"><path d="M4.5 1L1.5 4L4.5 7" stroke="#a0a0a0" stroke-width="1" fill="none"/></svg>
<svg style="position:absolute;left:975px;top:604px" width="6" height="8" viewBox="0 0 6 8"><path d="M1.5 1L4.5 4L1.5 7" stroke="#a0a0a0" stroke-width="1" fill="none"/></svg>
<div style="left:18px;top:630px;width:988px;height:34px;background:#ecf0f1"></div>
<div class="t" style="left:29.20px;top:641.90px;font-size:9.5px;color:#1f2d3a;font-weight:bold;transform:scaleX(0.9052);">[OK] Analyse abgeschlossen: 113 Einträge gefunden</div>
<div style="left:8px;top:681px;width:1008px;height:30px;background:#34495e"></div>
<div class="t" style="left:15.80px;top:691.00px;font-size:9.5px;color:#fff;transform:scaleX(0.9157);">Exchange SMTP Security Analyzer © 2025 Jörn Walter - <span style="color:#3498db">www.it-service-walter.com</span></div>
<div style="left:935px;top:689px;width:73px;height:14px;background:#c0392b;border:1px solid #c8503f;box-sizing:border-box"></div>
<div class="t" style="left:954.70px;top:691.00px;font-size:9.5px;color:#fff;transform:scaleX(0.8857);">Beenden</div>
<div style="left:366px;top:270px;width:304px;height:224px;background:#fff;border:1px solid #c2c2c2;box-sizing:border-box;box-shadow:0 1px 2px rgba(0,0,0,0.04)"></div>
<div style="left:367px;top:271px;width:302px;height:23px;background:#f3f3f3"></div>
<div class="t" style="left:372.50px;top:277.30px;font-size:9.2px;color:#1a1a1a;transform:scaleX(0.9248);">Message Tracking abgeschlossen</div>
<svg style="position:absolute;left:653px;top:276px" width="10" height="10" viewBox="0 0 10 10"><path d="M1 1L9 9M9 1L1 9" stroke="#333" stroke-width="1.1"/></svg>
<div style="left:367px;top:462px;width:302px;height:31px;background:#f0f0f0"></div>
<div style="left:603px;top:468px;width:55px;height:18px;background:#f3f3f3;border-top:1px solid #9a9a9a;border-left:1px solid #9a9a9a;border-right:1px solid #5a5a5a;border-bottom:1px solid #5a5a5a;box-shadow:inset 1px 1px 0 #fcfcfc,inset -1px -1px 0 #8a8a8a;box-sizing:border-box"></div>
<div class="t" style="left:625.00px;top:472.00px;font-size:8.9px;color:#111;transform:scaleX(0.8575);">OK</div>
<svg style="position:absolute;left:381px;top:309px" width="26" height="26" viewBox="0 0 26 26">
<circle cx="13" cy="13" r="12" fill="#c9c9c9"/><circle cx="13" cy="13" r="10.6" fill="#f2f2f2"/>
<circle cx="13" cy="13" r="9.8" fill="#2e4fa7"/>
<path d="M3.4 11 A9.8 9.8 0 0 1 21.5 7 L13 13 Z" fill="#3a63c8"/>
<path d="M5 6.5 A9.8 9.8 0 0 1 12 3.3 L10 8Z" fill="#5b9ee0"/>
<circle cx="12.8" cy="7.4" r="1.6" fill="#fff"/><rect x="11.5" y="10" width="2.6" height="9.6" fill="#fff"/></svg>
<div class="t" style="left:421.00px;top:310.70px;font-size:8.9px;color:#111;transform:scaleX(0.9256);">Message Tracking Analyse abgeschlossen!</div>
<div class="t" style="left:412.50px;top:329.84px;font-size:8.9px;color:#111;transform:scaleX(0.9515);">Gefundene Einträge: 113</div>
<div class="t" style="left:412.50px;top:348.98px;font-size:8.9px;color:#111;transform:scaleX(0.9657);">Gefundene Connectoren:</div>
<div class="t" style="left:412.50px;top:358.55px;font-size:8.9px;color:#111;transform:scaleX(0.8486);">• EXSE\Client Proxy EXSE</div>
<div class="t" style="left:412.50px;top:368.12px;font-size:8.9px;color:#111;transform:scaleX(0.8548);">• EXSE\Default EXSE</div>
<div class="t" style="left:424.10px;top:387.26px;font-size:8.9px;color:#111;transform:scaleX(0.8569);">HINWEIS:</div>
<div class="t" style="left:412.50px;top:396.83px;font-size:8.9px;color:#111;transform:scaleX(0.9390);">Message Tracking zeigt Mail-Zustellung, aber NICHT anonyme</div>
<div class="t" style="left:412.50px;top:406.40px;font-size:8.9px;color:#111;transform:scaleX(0.9357);">SMTP-Verbindungen.</div>
<div class="t" style="left:412.50px;top:425.54px;font-size:8.9px;color:#111;transform:scaleX(0.9328);">Für Sicherheitsanalyse verwende:</div>
<div class="t" style="left:421.70px;top:435.11px;font-size:8.9px;color:#111;transform:scaleX(0.9317);">Tab 2: Anonymous Analyse</div>
<svg style="position:absolute;left:412px;top:311px" width="8" height="8" viewBox="0 0 8 8"><path d="M0.8 4.4 L2.4 7 L6.6 1" stroke="#222" stroke-width="0.85" fill="none"/></svg>
<div style="position:absolute;left:413px;top:389px;width:6px;height:6px;border:1px solid #7a7a7a;border-radius:1px"></div>
<div style="position:absolute;left:416px;top:390px;width:1px;height:1px;background:#333"></div>
<div style="position:absolute;left:416px;top:392px;width:1px;height:3px;background:#333"></div>
<svg style="position:absolute;left:412px;top:437px" width="8" height="7" viewBox="0 0 8 7"><path d="M0.8 3.5H6.6M4.6 1.6L6.8 3.5L4.6 5.4" stroke="#222" stroke-width="1" fill="none"/></svg>
</body></html>
